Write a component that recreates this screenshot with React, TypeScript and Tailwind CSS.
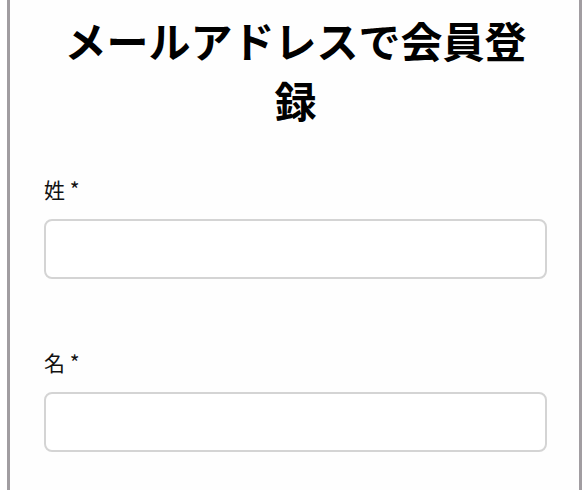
export default function App() {
  return (
    <div className="h-[490px] w-full overflow-hidden bg-white pl-[7px] pr-[4px]">
      <div
        className="h-full border-x-[3px] border-[#a19da1] bg-[#fefefe] pl-[34px] pr-[32px] pt-[10px]"
        style={{ fontFamily: '"Noto Sans CJK JP", "Noto Sans", sans-serif' }}
      >
        <h1 className="text-center text-[42px] font-bold leading-[60px] text-black">
          メールアドレスで会員登録
        </h1>
        <form className="mt-[45px] flex flex-col">
          <Field label="姓" />
          <div className="h-[69px]" />
          <Field label="名" />
        </form>
      </div>
    </div>
  )
}

function Field({ label }: { label: string }) {
  return (
    <label className="flex flex-col">
      <span className="mb-4 text-[21px] leading-[28px] text-[#111]">
        {label} *
      </span>
      <input
        type="text"
        className="h-[60px] w-full rounded-[8px] border-2 border-[#d4d4d4] bg-white px-3 text-[18px] outline-none"
      />
    </label>
  )
}
